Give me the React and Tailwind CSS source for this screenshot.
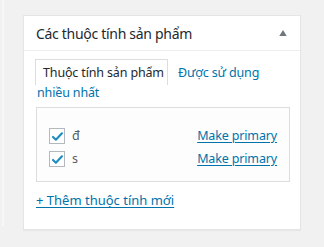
export default function App() {
  const terms = ['đ', 's']

  return (
    <div className="relative w-[324px] h-[247px] bg-[#f1f1f1] overflow-hidden" style={{ fontFamily: '"Noto Sans", "Open Sans", sans-serif' }}>
      <div className="absolute left-[2px] top-0 w-[2px] h-[226px] bg-[#f7f7f7]" />
      <div className="ml-[23px] pt-[15px]">
        <div className="w-[278px] h-[215px] bg-white border border-[#e5e5e5] shadow-[0_1px_1px_rgba(0,0,0,0.04)]">
          <div className="h-[35px] flex items-center justify-between pl-[12px] pr-[13px] border-b border-[#eeeeee]">
            <h2 className="text-[14px] text-[#23282d] tracking-[-0.3px]">Các thuộc tính sản phẩm</h2>
            <svg viewBox="0 0 10 8" className="w-[8px] h-[6px] text-[#72777c]"><path d="M5 0 L10 8 L0 8 Z" fill="currentColor" /></svg>
          </div>

          <div className="px-[11px] pt-[8px] text-[12.5px] tracking-[-0.15px]">
            <div className="leading-[17px]">
              <div className="flex items-start">
                <span className="w-[133px] h-[26px] border border-b-0 border-[#dddddd] bg-white pl-[7px] pt-[4px] text-[#23282d] whitespace-nowrap">Thuộc tính sản phẩm</span>
                <span className="ml-[10px] pt-[5px] text-[#0073aa] whitespace-nowrap">Được sử dụng</span>
              </div>
              <div className="pl-[2px] -mt-[1px] text-[#0073aa]">nhiều nhất</div>
            </div>

            <div className="mt-[6px] ml-[1px] w-[254px] h-[75px] border border-[#dddddd] bg-[#fdfdfd] pt-[20px] pl-[12px] pr-[12px]">
              {terms.map(t => (
                <div key={t} className="flex items-center justify-between h-[16px] mb-[7px]">
                  <label className="flex items-center gap-[7px] text-[#555d66]">
                    <span className="w-[16px] h-[16px] border border-[#b4b9be] bg-white flex items-center justify-center">
                      <svg viewBox="0 0 16 16" className="w-[13px] h-[13px]"><path d="M2.5 8.5 L6 12 L13.5 4" fill="none" stroke="#1e8cbe" strokeWidth="2.6" strokeLinecap="round" strokeLinejoin="round" /></svg>
                    </span>
                    {t}
                  </label>
                  <a href="#" className="text-[#0073aa] underline underline-offset-2">Make primary</a>
                </div>
              ))}
            </div>

            <a href="#" className="block mt-[9px] ml-[1px] text-[13px] tracking-[0px] text-[#0073aa] underline underline-offset-2">+ Thêm thuộc tính mới</a>
          </div>
        </div>
      </div>
    </div>
  )
}
